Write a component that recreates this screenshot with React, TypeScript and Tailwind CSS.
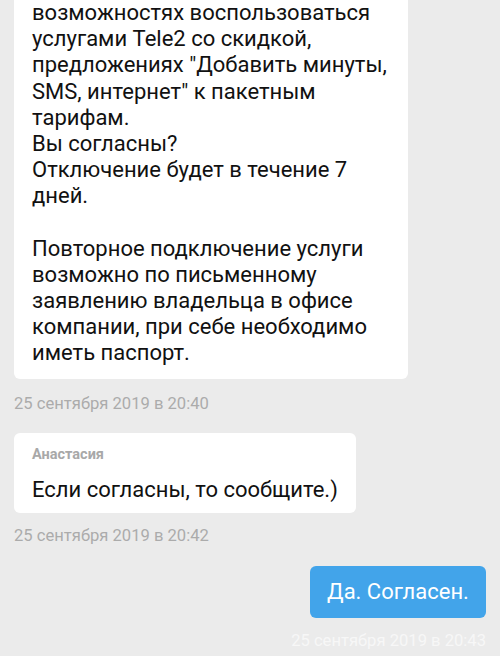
import React from 'react'

const firstMessage = [
  'возможностях воспользоваться',
  'услугами Tele2 со скидкой,',
  'предложениях "Добавить минуты,',
  'SMS, интернет" к пакетным',
  'тарифам.',
  'Вы согласны?',
  'Отключение будет в течение 7',
  'дней.',
  '',
  'Повторное подключение услуги',
  'возможно по письменному',
  'заявлению владельца в офисе',
  'компании, при себе необходимо',
  'иметь паспорт.'
]

const Stamp = ({ text, light }: { text: string; light?: boolean }) => (
  <div
    className={
      'whitespace-nowrap text-[16.6px] leading-[20px] ' +
      (light ? 'text-[#f7f7f7]' : 'text-[#ababab]')
    }
  >
    {text}
  </div>
)

export default function App() {
  return (
    <div
      className="h-[656px] w-[500px] overflow-hidden bg-[#ebebeb] text-[#111]"
      style={{ fontFamily: 'Roboto, "Noto Sans", sans-serif' }}
    >
      <div className="flex flex-col px-[14px]">
        <div className="w-[394px] rounded-b-[6px] bg-white px-[18px] pb-[12px] text-[22px] leading-[26.2px]">
          {firstMessage.map((line, i) => (
            <div key={i} className="h-[26.2px] whitespace-nowrap">
              {line}
            </div>
          ))}
        </div>

        <div className="mt-[15px]">
          <Stamp text="25 сентября 2019 в 20:40" />
        </div>

        <div className="mt-[19px] w-[342px] rounded-[6px] bg-white px-[18px] pb-[10px] pt-[14px]">
          <div className="text-[14.5px] font-bold leading-[16px] text-[#a8a8a8]">Анастасия</div>
          <div className="mt-[14px] whitespace-nowrap text-[22px] leading-[26px]">
            Если согласны, то сообщите.)
          </div>
        </div>

        <div className="mt-[13px]">
          <Stamp text="25 сентября 2019 в 20:42" />
        </div>

        <div className="mt-[20px] flex h-[52px] w-[176px] items-center justify-center self-end rounded-[6px] bg-[#42a4ea] text-[22px] text-white">
          Да. Согласен.
        </div>

        <div className="mt-[13px] flex justify-end">
          <Stamp text="25 сентября 2019 в 20:43" light />
        </div>
      </div>
    </div>
  )
}
